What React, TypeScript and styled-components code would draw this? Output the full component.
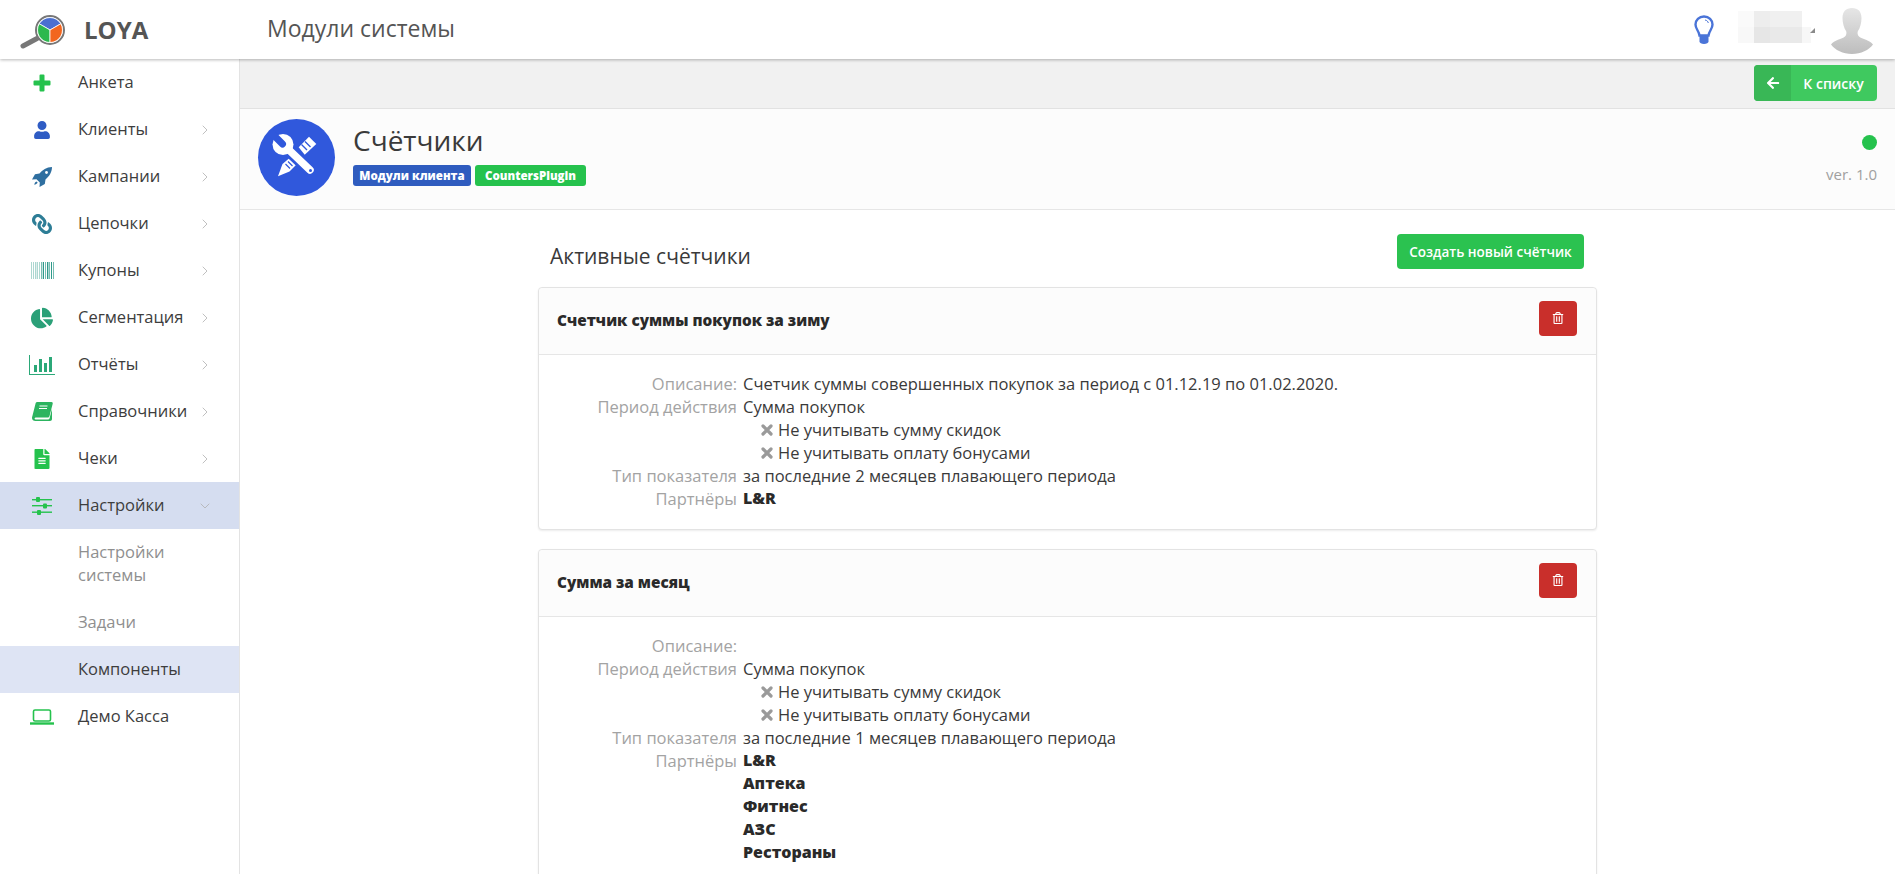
import React from "react";
import styled, { createGlobalStyle } from "styled-components";
import { ChevronDown, ChevronRight } from "lucide-react";
import {
  FaArrowLeft,
  FaChartPie,
  FaFileAlt,
  FaLink,
  FaRegTrashAlt,
  FaUser,
} from "react-icons/fa";

const FONT = `"Open Sans", "Noto Sans", sans-serif`;

const GlobalStyle = createGlobalStyle`
  html, body {
    margin: 0;
    height: 100%;
    overflow: hidden;
    background: #fff;
    font-family: ${FONT};
    color: #3a3a3a;
  }
`;

const Page = styled.div`
  display: flex;
  flex-direction: column;
  height: 874px;
  overflow: hidden;
`;

const TopBar = styled.header`
  flex: none;
  position: relative;
  z-index: 2;
  display: flex;
  align-items: center;
  height: 59px;
  background: #fff;
  box-shadow: 0 1px 3px rgba(0, 0, 0, 0.28);
`;

const Brand = styled.div`
  width: 240px;
  flex: none;
  box-sizing: border-box;
  display: flex;
  align-items: center;
  gap: 14px;
  padding-left: 19px;
  font-size: 24px;
  font-weight: 700;
  color: #555;
`;

const PageTitle = styled.div`
  flex: 1;
  padding: 0 0 3px 27px;
  font-size: 23px;
  color: #555;
`;

const TopRight = styled.div`
  display: flex;
  align-items: center;
  padding-right: 22px;
`;

const UserBlur = styled.div`
  position: relative;
  margin: 0 16px 5px 24px;
  width: 77px;
  height: 32px;
`;

const Caret = styled.span`
  position: absolute;
  right: 0;
  bottom: 10px;
  width: 0;
  height: 0;
  border-left: 5px solid transparent;
  border-bottom: 5px solid #8a8a8a;
`;

const AvatarWrap = styled.div`
  display: flex;
  margin-top: 2px;
`;

const Body = styled.div`
  flex: 1;
  display: flex;
  min-height: 0;
`;

const Sidebar = styled.nav`
  flex: none;
  width: 240px;
  box-sizing: border-box;
  border-right: 1px solid #e3e3e3;
  background: #fff;
`;

const MenuItem = styled.div<{ $active?: boolean }>`
  display: flex;
  align-items: center;
  height: 47px;
  background: ${(p) => (p.$active ? "#d5ddf0" : "transparent")};
  font-size: 16.5px;
  color: #3d3d3d;
`;

const MenuIcon = styled.span<{ $color: string; $flip?: boolean }>`
  flex: none;
  display: flex;
  align-items: center;
  justify-content: center;
  width: 78px;
  padding-left: 6px;
  box-sizing: border-box;
  color: ${(p) => p.$color};

  svg {
    transform: ${(p) => (p.$flip ? "scaleX(-1)" : "none")};
  }
`;

const MenuLabel = styled.span`
  flex: 1;
  padding-bottom: 2px;
`;

const MenuArrow = styled.span`
  display: flex;
  width: 42px;
  color: #b0b0b0;
`;

const SubItem = styled.div<{ $active?: boolean }>`
  padding: 11px 20px 13px 78px;
  font-size: 16.5px;
  line-height: 23px;
  color: ${(p) => (p.$active ? "#3d3d3d" : "#8f8f8f")};
  background: ${(p) => (p.$active ? "#dee4f4" : "transparent")};
`;

const Main = styled.main`
  flex: 1;
  min-width: 0;
  display: flex;
  flex-direction: column;
`;

const ActionBar = styled.div`
  flex: none;
  display: flex;
  justify-content: flex-end;
  align-items: flex-start;
  height: 50px;
  box-sizing: border-box;
  padding: 6px 18px 0 0;
  background: #f1f1f1;
  border-bottom: 1px solid #e2e2e2;
`;

const BackButton = styled.div`
  display: flex;
  height: 36px;
  width: 123px;
  border-radius: 4px;
  overflow: hidden;
  background: #3fc95f;
  color: #fff;
  font-size: 14px;
  font-weight: 600;
`;

const BackIcon = styled.span`
  flex: none;
  display: flex;
  align-items: center;
  justify-content: center;
  width: 37px;
  background: #39b756;
`;

const BackLabel = styled.span`
  flex: 1;
  display: flex;
  align-items: center;
  justify-content: center;
  padding-right: 1px;
`;

const PluginHeader = styled.div`
  flex: none;
  display: flex;
  align-items: center;
  height: 101px;
  box-sizing: border-box;
  padding: 0 18px 0 18px;
  background: #fcfcfc;
  border-bottom: 1px solid #e6e6e6;
`;

const PluginIcon = styled.div`
  flex: none;
  display: flex;
  width: 77px;
  height: 77px;
  border-radius: 50%;
  background: #3058dc;
  margin: 0 18px 4px 0;
`;

const PluginInfo = styled.div`
  flex: 1;
  padding-bottom: 10px;
`;

const PluginName = styled.div`
  font-size: 28px;
  line-height: 36px;
  color: #3a3a3a;
  margin-bottom: 7px;
`;

const Badges = styled.div`
  display: flex;
  gap: 4px;
`;

const Badge = styled.span<{ $color: string; $width: number }>`
  display: flex;
  align-items: center;
  justify-content: center;
  width: ${(p) => p.$width}px;
  height: 21px;
  border-radius: 3px;
  font-size: 11.5px;
  font-weight: 800;
  color: #fff;
  background: ${(p) => p.$color};
`;

const PluginMeta = styled.div`
  display: flex;
  flex-direction: column;
  align-items: flex-end;
  gap: 14px;
`;

const StatusDot = styled.span`
  width: 15px;
  height: 15px;
  border-radius: 50%;
  background: #25c24d;
`;

const Version = styled.span`
  font-size: 15px;
  color: #a0a0a0;
`;

const Content = styled.div`
  flex: 1;
  min-height: 0;
  width: 1059px;
  margin: 0 auto;
`;

const SectionHead = styled.div`
  display: flex;
  justify-content: space-between;
  align-items: flex-start;
  height: 77px;
  box-sizing: border-box;
  padding: 24px 13px 0 12px;
`;

const SectionTitle = styled.div`
  font-size: 21px;
  line-height: 44px;
  color: #3a3a3a;
`;

const CreateButton = styled.div`
  display: flex;
  align-items: center;
  justify-content: center;
  width: 187px;
  height: 35px;
  border-radius: 4px;
  background: #2bc250;
  color: #fff;
  font-size: 13.5px;
  font-weight: 600;
`;

const Card = styled.section`
  border: 1px solid #e3e3e3;
  border-radius: 4px;
  box-shadow: 0 1px 2px rgba(0, 0, 0, 0.08);
  margin-bottom: 19px;
  background: #fff;
`;

const CardHeader = styled.div`
  display: flex;
  align-items: center;
  justify-content: space-between;
  height: 67px;
  box-sizing: border-box;
  padding: 0 19px 2px 18px;
  background: #fcfcfc;
  border-bottom: 1px solid #e6e6e6;
  border-radius: 4px 4px 0 0;
`;

const CardTitle = styled.div`
  font-size: 15.3px;
  font-weight: 800;
  color: #2a2a2a;
`;

const DeleteButton = styled.div`
  display: flex;
  align-items: center;
  justify-content: center;
  width: 38px;
  height: 35px;
  margin-bottom: 4px;
  border-radius: 4px;
  background: #c92f2b;
  color: #fff;
  font-size: 12px;
`;

const CardBody = styled.div`
  padding: 17px 0 19px;
  display: grid;
  grid-template-columns: 198px 1fr;
  column-gap: 6px;
  font-size: 16.5px;
  line-height: 23px;
  color: #3a3a3a;
`;

const Label = styled.div`
  text-align: right;
  color: #a3a3a3;
`;

const Value = styled.div``;

const Option = styled.div`
  display: flex;
  align-items: center;
  gap: 5px;
  padding-left: 18px;
  color: #3a3a3a;
`;

const Partner = styled.div`
  font-size: 16px;
  font-weight: 800;
  color: #2a2a2a;
`;

const Logo = () => (
  <svg width="51" height="40" viewBox="0 0 51 40">
    <path d="M4 36 L18 28.500" stroke="#777" strokeWidth="5" strokeLinecap="round" />
    <circle cx="31" cy="20" r="14" fill="#fff" stroke="#777" strokeWidth="2" />
    <path d="M31 20 L20.200 13.750 A12.500 12.500 0 0 1 41.800 13.750 Z" fill="#4a6fd0" stroke="#fff" strokeWidth="0.8" />
    <path d="M31 20 L20.200 13.750 A12.500 12.500 0 0 0 31 32.500 Z" fill="#2cb84e" stroke="#fff" strokeWidth="0.8" />
    <path d="M31 20 L41.800 13.750 A12.500 12.500 0 0 1 31 32.500 Z" fill="#f2661f" stroke="#fff" strokeWidth="0.8" />
  </svg>
);

const PlusIcon = () => (
  <svg width="18" height="18" viewBox="0 0 18 18" fill="currentColor">
    <path d="M6.500 1.500A1 1 0 0 1 7.500.500h3a1 1 0 0 1 1 1v5h5a1 1 0 0 1 1 1v3a1 1 0 0 1-1 1h-5v5a1 1 0 0 1-1 1h-3a1 1 0 0 1-1-1v-5h-5a1 1 0 0 1-1-1v-3a1 1 0 0 1 1-1h5z" />
  </svg>
);

const RocketIcon = () => (
  <svg width="20" height="20" viewBox="0 0 20 20" fill="currentColor">
    <path d="M20 0C14.500 0 10.500 3 7.500 6.500L3 7.200 0 12.500l4.500-.3 3.300 3.300L7.500 20l5.300-3 .7-4.500C17 9.500 20 5.500 20 0z" />
    <path d="M4.500 14.500C3 15 2.500 16.500 2.300 17.800 3.500 17.600 5 17 5.600 15.600z" />
    <circle cx="14.500" cy="5.500" r="1.400" fill="#fff" />
  </svg>
);

const BarcodeIcon = () => (
  <svg width="23" height="17" viewBox="0 0 23 17" fill="#2f9a8a">
    {[0, 2, 4, 6, 8, 10, 12, 14, 16, 18, 20, 22].map((x, i) => (
      <rect key={x} x={x} width={i % 3 === 2 ? 1.4 : 1} height="17" opacity={i < 5 ? 0.4 : i % 2 ? 0.65 : 1} />
    ))}
  </svg>
);

const ReportIcon = () => (
  <svg width="26" height="20" viewBox="0 0 26 20" fill="#2ba878">
    <path d="M0 0h1v19h25v1H0z" />
    <rect x="5" y="10" width="3" height="7" />
    <rect x="10" y="4" width="3" height="13" />
    <rect x="15" y="8" width="3" height="9" />
    <rect x="20" y="2" width="3" height="15" />
  </svg>
);

const BookIcon = () => (
  <svg width="21" height="19" viewBox="0 0 21 19" fill="#2cb460">
    <path d="M5 0h14.500c1 0 1.500.8 1.200 1.800L17.500 14c-.3 1-1 1.500-2 1.500H4.500c-1.200 0-1.900.5-1.900 1.100 0 .6.700 1 1.700 1h11.700c.8 0 1.300-.4 1.500-1.100l2.500-9.500v10c0 1.100-.8 2-2 2H3.500C1.500 19 0 17.800 0 16c0-.7.100-1.300.4-2L3.500 1.800C3.700.7 4.200 0 5 0z" />
    <path d="M7.500 4h8M7 6.500h8" stroke="#fff" strokeWidth="1" />
  </svg>
);

const SlidersIcon = () => (
  <svg width="20" height="18" viewBox="0 0 20 18" fill="#25c24d">
    <rect y="2" width="20" height="1.400" />
    <rect y="8" width="20" height="1.400" />
    <rect y="14.500" width="20" height="1.400" />
    <rect x="4" y="0" width="4" height="5" rx="1" />
    <rect x="11" y="6.500" width="4" height="5" rx="1" />
    <rect x="5" y="13" width="4" height="5" rx="1" />
  </svg>
);

const LaptopIcon = () => (
  <svg width="24" height="16" viewBox="0 0 24 16" fill="none" stroke="#25c24d">
    <rect x="3.500" y="1" width="17" height="11" rx="1.500" strokeWidth="1.600" />
    <path d="M0 14.500h24" strokeWidth="2.400" />
  </svg>
);

const BulbIcon = () => (
  <svg width="20" height="30" viewBox="0 0 20 30">
    <path
      d="M10 1.500C5 1.500 1.500 5 1.500 9.500c0 4.500 3.500 6.500 4 11h9c.5-4.500 4-6.500 4-11C18.500 5 15 1.500 10 1.500z"
      fill="#fff"
      stroke="#4a74d8"
      strokeWidth="2.400"
    />
    <path d="M5.500 20h9v6.500c0 1.500-2 2.500-4.500 2.500s-4.500-1-4.500-2.500z" fill="#4a74d8" />
    <path d="M11 5c2 .3 3 1.500 3.300 3" fill="none" stroke="#4a74d8" strokeWidth="1" />
  </svg>
);

const BlurredName = () => (
  <svg width="74" height="32" viewBox="0 0 74 32">
    <rect width="16" height="16" fill="#fafafa" />
    <rect y="16" width="16" height="16" fill="#f8f8f8" />
    <rect x="16" width="16" height="16" fill="#ededed" />
    <rect x="16" y="16" width="16" height="16" fill="#e6e6e6" />
    <rect x="32" width="32" height="16" fill="#f0f0f0" />
    <rect x="32" y="16" width="32" height="16" fill="#e9e9e9" />
    <rect x="64" y="16" width="9" height="16" fill="#f7f7f7" />
  </svg>
);

const Avatar = () => (
  <svg width="42" height="46" viewBox="0 0 42 46">
    <defs>
      <linearGradient id="avatarFill" x1="0" y1="0" x2="0" y2="1">
        <stop offset="0" stopColor="#e6e6e6" />
        <stop offset="1" stopColor="#bdbdbd" />
      </linearGradient>
    </defs>
    <path
      d="M21 0c6 0 9.500 3.500 9.500 10 0 5-1.500 10-3.500 13-.7 1-.7 4 1 5.500 3 2.500 11 3.500 14 8C38 42 30 46 21 46S4 42 0 36.500c3-4.500 11-5.500 14-8 1.700-1.500 1.700-4.500 1-5.500-2-3-3.500-8-3.500-13C11.500 3.500 15 0 21 0z"
      fill="url(#avatarFill)"
    />
  </svg>
);

const CrossIcon = () => (
  <svg width="12" height="12" viewBox="0 0 12 12">
    <path d="M2 2l8 8M10 2l-8 8" stroke="#9a9a9a" strokeWidth="3.200" strokeLinecap="round" />
  </svg>
);

const PluginGlyph = () => (
  <svg width="77" height="77" viewBox="0 0 77 77">
    <path d="M51 17.700 L58.300 25 L46.700 35.700 L40.700 28.300 Z" fill="#fff" />
    <path d="M47 22.500 L52.500 28 M43.500 25.500 L49 31" stroke="#3058dc" strokeWidth="1.400" />
    <path d="M20 57.300 L24.500 45 L31.500 39 L38 46 L31.500 52.500 Z" fill="#fff" />
    <path d="M27.500 45 L32 49.500 M30 42.500 L34.500 47" stroke="#3058dc" strokeWidth="1.200" />
    <path d="M31 31 L52 51" stroke="#3058dc" strokeWidth="13" />
    <path d="M30 30 L52 51" stroke="#fff" strokeWidth="7.500" strokeLinecap="round" />
    <circle cx="25" cy="25.500" r="10.500" fill="#fff" />
    <path d="M14 14.500 L24.500 25" stroke="#3058dc" strokeWidth="7" strokeLinecap="round" />
    <circle cx="52.500" cy="51.500" r="1.500" fill="#3058dc" />
  </svg>
);

type MenuEntry = {
  label: string;
  icon: React.ReactNode;
  color: string;
  arrow?: boolean;
  flip?: boolean;
};

const topMenu: MenuEntry[] = [
  { label: "Анкета", icon: <PlusIcon />, color: "#25c24d" },
  { label: "Клиенты", icon: <FaUser size={18} />, color: "#2f5cc4", arrow: true },
  { label: "Кампании", icon: <RocketIcon />, color: "#2f6fa0", arrow: true },
  { label: "Цепочки", icon: <FaLink size={20} />, color: "#2d7d96", arrow: true, flip: true },
  { label: "Купоны", icon: <BarcodeIcon />, color: "#2f9a8a", arrow: true },
  { label: "Сегментация", icon: <FaChartPie size={22} />, color: "#2ba078", arrow: true },
  { label: "Отчёты", icon: <ReportIcon />, color: "#2ba878", arrow: true },
  { label: "Справочники", icon: <BookIcon />, color: "#2cb460", arrow: true },
  { label: "Чеки", icon: <FaFileAlt size={20} />, color: "#25c24d", arrow: true },
];

type Counter = {
  title: string;
  description: string;
  months: number;
  partners: string[];
};

const counters: Counter[] = [
  {
    title: "Счетчик суммы покупок за зиму",
    description: "Счетчик суммы совершенных покупок за период с 01.12.19 по 01.02.2020.",
    months: 2,
    partners: ["L&R"],
  },
  {
    title: "Сумма за месяц",
    description: "",
    months: 1,
    partners: ["L&R", "Аптека", "Фитнес", "АЗС", "Рестораны"],
  },
];

const CounterCard = ({ counter }: { counter: Counter }) => (
  <Card>
    <CardHeader>
      <CardTitle>{counter.title}</CardTitle>
      <DeleteButton>
        <FaRegTrashAlt />
      </DeleteButton>
    </CardHeader>
    <CardBody>
      <Label>Описание:</Label>
      <Value>{counter.description}</Value>
      <Label>Период действия</Label>
      <Value>
        Сумма покупок
        <Option>
          <CrossIcon /> Не учитывать сумму скидок
        </Option>
        <Option>
          <CrossIcon /> Не учитывать оплату бонусами
        </Option>
      </Value>
      <Label>Тип показателя</Label>
      <Value>за последние {counter.months} месяцев плавающего периода</Value>
      <Label>Партнёры</Label>
      <Value>
        {counter.partners.map((name) => (
          <Partner key={name}>{name}</Partner>
        ))}
      </Value>
    </CardBody>
  </Card>
);

export default function App() {
  return (
    <Page>
      <GlobalStyle />
      <TopBar>
        <Brand>
          <Logo />
          LOYA
        </Brand>
        <PageTitle>Модули системы</PageTitle>
        <TopRight>
          <BulbIcon />
          <UserBlur>
            <BlurredName />
            <Caret />
          </UserBlur>
          <AvatarWrap>
            <Avatar />
          </AvatarWrap>
        </TopRight>
      </TopBar>
      <Body>
        <Sidebar>
          {topMenu.map((item) => (
            <MenuItem key={item.label}>
              <MenuIcon $color={item.color} $flip={item.flip}>
                {item.icon}
              </MenuIcon>
              <MenuLabel>{item.label}</MenuLabel>
              {item.arrow && (
                <MenuArrow>
                  <ChevronRight size={16} strokeWidth={1.2} />
                </MenuArrow>
              )}
            </MenuItem>
          ))}
          <MenuItem $active>
            <MenuIcon $color="#25c24d">
              <SlidersIcon />
            </MenuIcon>
            <MenuLabel>Настройки</MenuLabel>
            <MenuArrow>
              <ChevronDown size={16} strokeWidth={1.2} />
            </MenuArrow>
          </MenuItem>
          <SubItem>
            Настройки
            <br />
            системы
          </SubItem>
          <SubItem>Задачи</SubItem>
          <SubItem $active>Компоненты</SubItem>
          <MenuItem>
            <MenuIcon $color="#25c24d">
              <LaptopIcon />
            </MenuIcon>
            <MenuLabel>Демо Касса</MenuLabel>
          </MenuItem>
        </Sidebar>
        <Main>
          <ActionBar>
            <BackButton>
              <BackIcon>
                <FaArrowLeft size={14} />
              </BackIcon>
              <BackLabel>К списку</BackLabel>
            </BackButton>
          </ActionBar>
          <PluginHeader>
            <PluginIcon>
              <PluginGlyph />
            </PluginIcon>
            <PluginInfo>
              <PluginName>Счётчики</PluginName>
              <Badges>
                <Badge $color="#2f5cbf" $width={118}>
                  Модули клиента
                </Badge>
                <Badge $color="#25c24d" $width={111}>
                  CountersPlugin
                </Badge>
              </Badges>
            </PluginInfo>
            <PluginMeta>
              <StatusDot />
              <Version>ver. 1.0</Version>
            </PluginMeta>
          </PluginHeader>
          <Content>
            <SectionHead>
              <SectionTitle>Активные счётчики</SectionTitle>
              <CreateButton>Создать новый счётчик</CreateButton>
            </SectionHead>
            {counters.map((counter) => (
              <CounterCard key={counter.title} counter={counter} />
            ))}
          </Content>
        </Main>
      </Body>
    </Page>
  );
}
